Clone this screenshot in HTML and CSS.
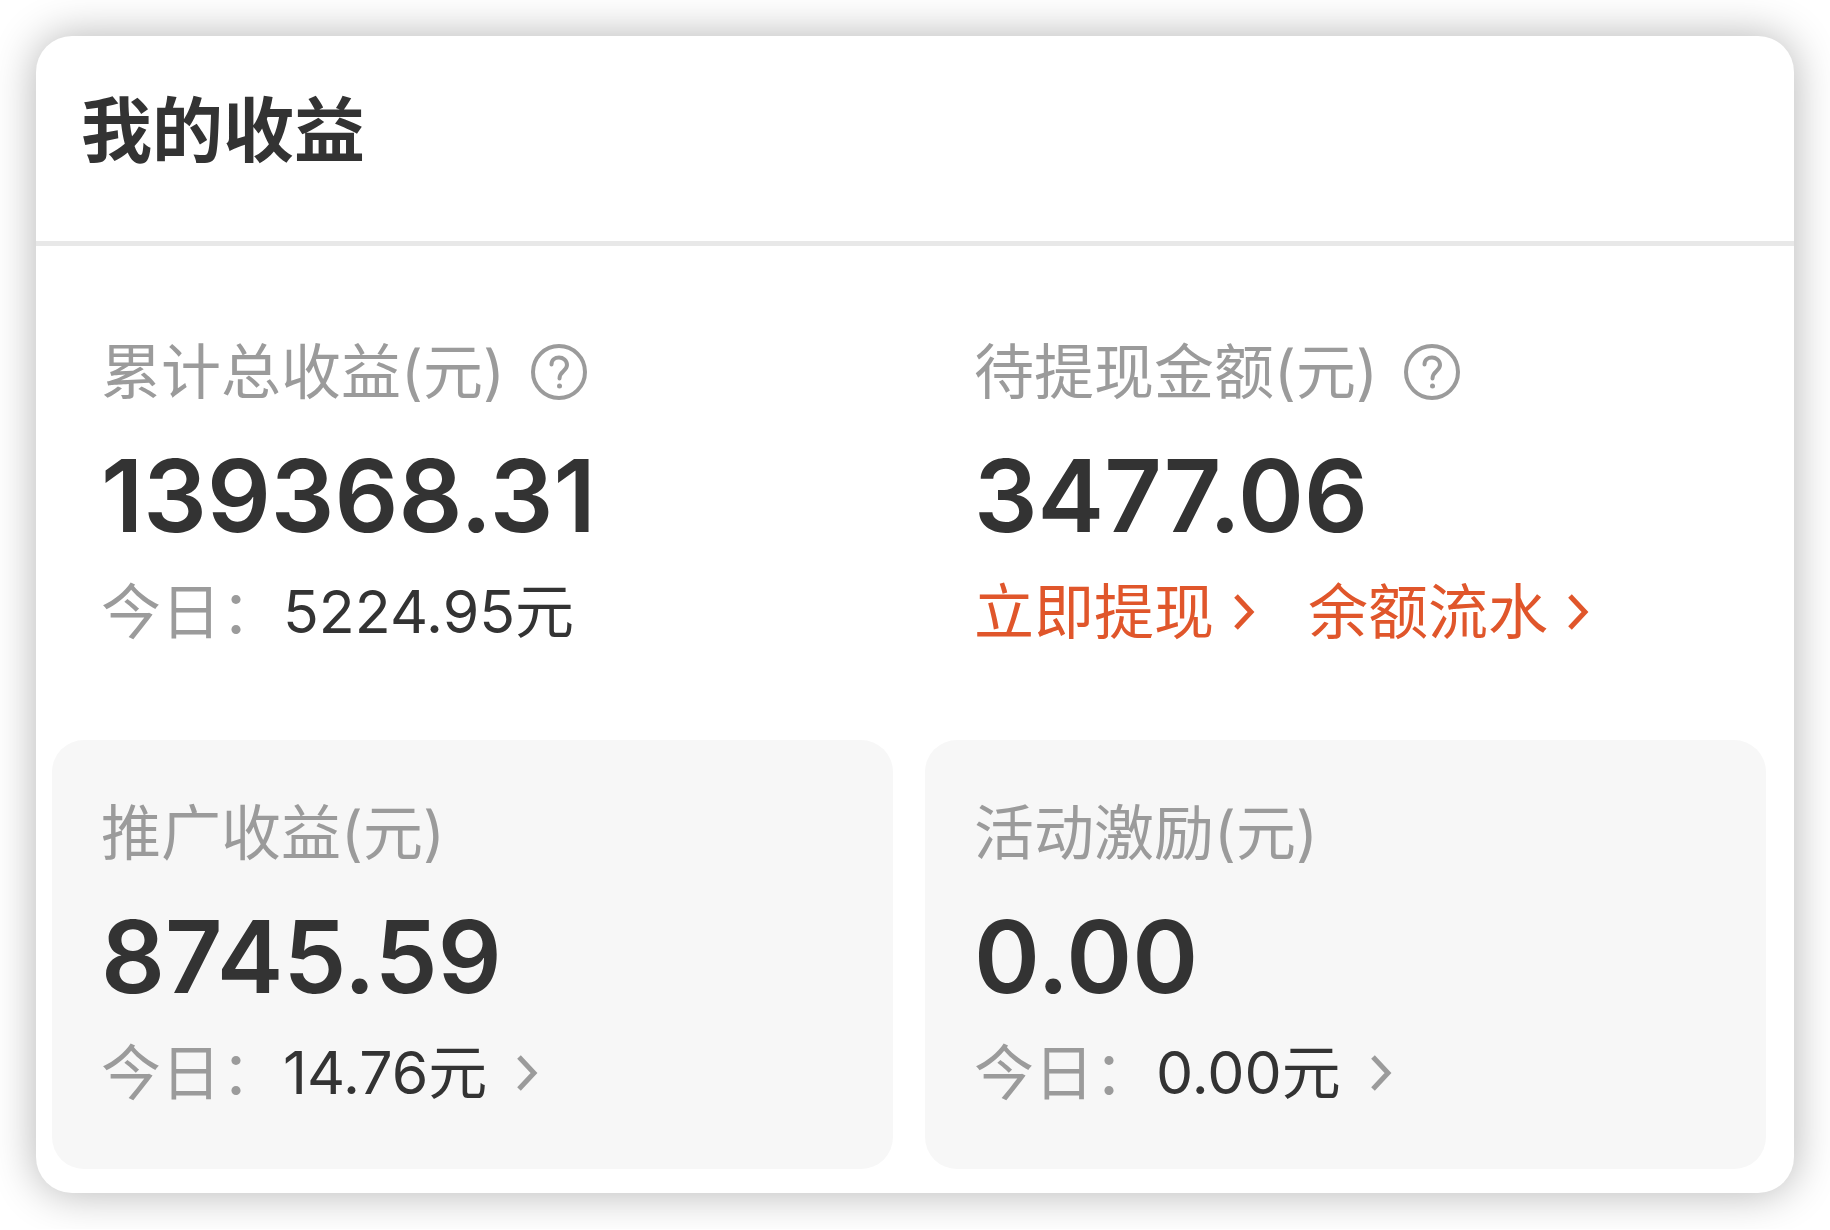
FILE: index.html
```html
<!DOCTYPE html>
<html lang="zh-CN">
<head>
<meta charset="utf-8">
<meta name="viewport" content="width=device-width, initial-scale=1">
<title>我的收益</title>
<link rel="stylesheet" href="styles.css">
</head>
<body>
<svg class="sprite" aria-hidden="true">
  <symbol id="help" viewBox="0 0 56 56">
    <circle cx="28" cy="28" r="26" fill="none" stroke="currentColor" stroke-width="4"/>
    <path d="M20.500 20.500C20.500 16 24 13.500 28 13.500s8 2.800 8 7.500c0 6-7.500 6-7.500 13.500" fill="none" stroke="currentColor" stroke-width="4" stroke-linecap="round"/>
    <circle cx="28.500" cy="42" r="2.500" fill="currentColor"/>
  </symbol>
  <symbol id="chevron" viewBox="0 0 24 40">
    <path d="M4 4L19 20L4 36" fill="none" stroke="currentColor" stroke-width="5"/>
  </symbol>
</svg>
<main class="card">
  <header class="card-header">
    <h1 class="title">我的收益</h1>
  </header>
  <div class="grid">
    <section class="tile">
      <h2 class="label">累计总收益(元)<button class="help" type="button" aria-label="说明"><svg class="help-icon"><use href="#help"/></svg></button></h2>
      <p class="amount">139368.31</p>
      <p class="row"><span class="today">今日：</span><span class="value">5224.95元</span></p>
    </section>
    <section class="tile">
      <h2 class="label">待提现金额(元)<button class="help" type="button" aria-label="说明"><svg class="help-icon"><use href="#help"/></svg></button></h2>
      <p class="amount">3477.06</p>
      <p class="row links">
        <a class="link" href="#withdraw">立即提现<svg class="chevron"><use href="#chevron"/></svg></a>
        <a class="link" href="#balance">余额流水<svg class="chevron"><use href="#chevron"/></svg></a>
      </p>
    </section>
    <section class="tile filled">
      <h2 class="label">推广收益(元)</h2>
      <p class="amount">8745.59</p>
      <a class="row detail" href="#promotion"><span class="today">今日：</span><span class="value">14.76元</span><svg class="chevron"><use href="#chevron"/></svg></a>
    </section>
    <section class="tile filled">
      <h2 class="label">活动激励(元)</h2>
      <p class="amount">0.00</p>
      <a class="row detail" href="#activity"><span class="today">今日：</span><span class="value">0.00元</span><svg class="chevron"><use href="#chevron"/></svg></a>
    </section>
  </div>
</main>
</body>
</html>
```
FILE: styles.css
```css
* {
  box-sizing: border-box;
}

body {
  margin: 0;
  padding: 36px;
  background: #fff;
  color: #333;
  font-family: Inter, "Noto Sans CJK SC", sans-serif;
  font-size: 60px;
  line-height: 80px;
}

h1, h2, p {
  margin: 0;
}

a {
  color: inherit;
  text-decoration: none;
}

.sprite {
  position: absolute;
  width: 0;
  height: 0;
}

.card {
  border-radius: 36px;
  background: #fff;
  box-shadow: 0 0 44px rgba(0, 0, 0, 0.3);
}

.card-header {
  padding: 54px 45px 71px;
  border-bottom: 5px solid #e8e8e8;
}

.title {
  font-size: 71px;
  font-weight: 700;
  line-height: 80px;
}

.grid {
  display: grid;
  grid-template-columns: 1fr 1fr;
  gap: 32px;
  padding: 33px 28px 24px 16px;
}

.tile {
  padding: 53px 49px 56px;
  border-radius: 32px;
}

.filled {
  background: #f7f7f7;
}

.label {
  display: flex;
  align-items: center;
  gap: 26px;
  margin-bottom: 24px;
  color: #9b9b9b;
  font-size: 60px;
  font-weight: 400;
}

.help {
  display: flex;
  padding: 0;
  border: 0;
  background: none;
  color: inherit;
}

.help-icon {
  width: 56px;
  height: 56px;
}

.amount {
  margin-bottom: 16px;
  font-size: 100px;
  font-weight: 600;
  line-height: 120px;
}

.row {
  display: flex;
  align-items: center;
}

.today {
  margin-right: 2px;
  color: #9b9b9b;
}

.value {
  font-size: 59px;
}

.links {
  gap: 52px;
  color: #e0562b;
}

.link {
  display: flex;
  align-items: center;
  gap: 18px;
}

.chevron {
  width: 24px;
  height: 40px;
}

.detail .chevron {
  margin-left: 28px;
  color: #9b9b9b;
}
```
